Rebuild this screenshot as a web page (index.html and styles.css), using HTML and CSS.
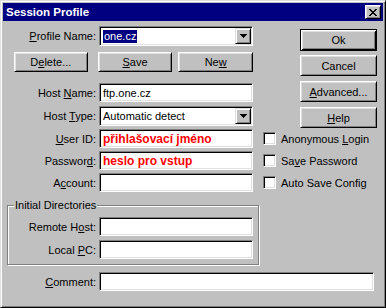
FILE: index.html
```html
<!DOCTYPE html>
<html lang="cs">
<head>
    <meta charset="UTF-8">
    <title>Session Profile</title>
    <link rel="stylesheet" href="styles.css">
</head>
<body>
    <div class="window">
        <div class="titlebar">
            <span class="title">Session Profile</span>
            <span class="close-btn">
                <svg width="8" height="7" viewBox="0 0 8 7" shape-rendering="crispEdges"><path d="M0 0h2v1H0zM6 0h2v1H6zM1 1h2v1H1zM5 1h2v1H5zM2 2h4v1H2zM3 3h2v1H3zM2 4h4v1H2zM1 5h2v1H1zM5 5h2v1H5zM0 6h2v1H0zM6 6h2v1H6z" fill="#000"/></svg>
            </span>
        </div>
        <div class="content">
            <!-- profile + host, buttons on the right -->
            <div class="top">
                <div class="top-left">
                    <div class="row row-profile">
                        <span class="label"><u>P</u>rofile Name:</span>
                        <div class="combo">
                            <span class="combo-text"><span class="selected">one.cz</span></span>
                            <span class="drop-btn">
                                <svg width="7" height="4" viewBox="0 0 7 4" shape-rendering="crispEdges"><path d="M0 0h7v1H0zM1 1h5v1H1zM2 2h3v1H2zM3 3h1v1H3z" fill="#000"/></svg>
                            </span>
                        </div>
                    </div>
                    <div class="btn-row">
                        <button class="btn btn-delete">D<u>e</u>lete...</button>
                        <button class="btn btn-save"><u>S</u>ave</button>
                        <button class="btn btn-new">Ne<u>w</u></button>
                    </div>
                    <div class="row row-host">
                        <span class="label">Host <u>N</u>ame:</span>
                        <div class="edit">ftp.one.cz</div>
                    </div>
                    <div class="row row-type">
                        <span class="label">Host <u>T</u>ype:</span>
                        <div class="combo">
                            <span class="combo-text">Automatic detect</span>
                            <span class="drop-btn">
                                <svg width="7" height="4" viewBox="0 0 7 4" shape-rendering="crispEdges"><path d="M0 0h7v1H0zM1 1h5v1H1zM2 2h3v1H2zM3 3h1v1H3z" fill="#000"/></svg>
                            </span>
                        </div>
                    </div>
                </div>
                <div class="side">
                    <button class="btn btn-default">Ok</button>
                    <button class="btn btn-side btn-cancel">Cancel</button>
                    <button class="btn btn-side"><u>A</u>dvanced...</button>
                    <button class="btn btn-side"><u>H</u>elp</button>
                </div>
            </div>

            <!-- login -->
            <div class="creds">
                <div class="row">
                    <span class="label"><u>U</u>ser ID:</span>
                    <div class="edit edit-red">přihlašovací jméno</div>
                    <div class="check"><span class="check-box"></span><span>Anonymous <u>L</u>ogin</span></div>
                </div>
                <div class="row row-next">
                    <span class="label">Passwor<u>d</u>:</span>
                    <div class="edit edit-red">heslo pro vstup</div>
                    <div class="check"><span class="check-box"></span><span>Sa<u>v</u>e Password</span></div>
                </div>
                <div class="row row-next">
                    <span class="label">A<u>c</u>count:</span>
                    <div class="edit"></div>
                    <div class="check"><span class="check-box"></span><span>Auto Save Config</span></div>
                </div>
            </div>

            <div class="group">
                <div class="group-title">Initial Directories</div>
                <div class="row row-remote">
                    <span class="label label-group">Remote H<u>o</u>st:</span>
                    <div class="edit"></div>
                </div>
                <div class="row row-local">
                    <span class="label label-group">Local <u>P</u>C:</span>
                    <div class="edit"></div>
                </div>
            </div>

            <div class="row row-comment">
                <span class="label"><u>C</u>omment:</span>
                <div class="edit edit-wide"></div>
            </div>
        </div>
    </div>
</body>
</html>
```

FILE: styles.css
```css
body {
    margin: 0;
    background-color: #c0c0c0;
    font-family: "Liberation Sans", Arial, sans-serif;
    font-size: 11px;
    color: #000;
}
.window {
    width: 386px;
    height: 308px;
    box-sizing: border-box;
    border: 1px solid;
    border-color: #dfdfdf #000 #000 #dfdfdf;
    box-shadow: inset 1px 1px #fff, inset -1px -1px #808080;
    padding: 2px;
    background-color: #c0c0c0;
}
.titlebar {
    height: 18px;
    background-color: #000080;
    display: flex;
    align-items: center;
    justify-content: space-between;
    padding: 0 2px 0 3px;
}
.title {
    color: #fff;
    font-weight: bold;
    font-size: 11.5px;
}
.close-btn {
    width: 16px;
    height: 14px;
    box-sizing: border-box;
    border: 1px solid;
    border-color: #fff #000 #000 #fff;
    box-shadow: inset 1px 1px #dfdfdf, inset -1px -1px #808080;
    background-color: #c0c0c0;
    display: flex;
    align-items: center;
    justify-content: center;
}
.close-btn svg {
    display: block;
}

.top {
    display: flex;
    align-items: flex-start;
}
.top-left {
    width: 250px;
}
.side {
    width: 77px;
    margin-left: 47px;
    padding-top: 8px;
    display: flex;
    flex-direction: column;
}

.row {
    display: flex;
    align-items: center;
}
.label {
    flex: none;
    width: 93px;
    margin-right: 3px;
    text-align: right;
    white-space: nowrap;
}
.label-group {
    width: 88px;
}
.row-profile {
    margin-top: 5px;
}
.row-host {
    margin-top: 11px;
}
.row-type {
    margin-top: 4px;
}

/* sunken fields */
.combo,
.edit {
    flex: none;
    width: 154px;
    box-sizing: border-box;
    border: 1px solid;
    border-color: #808080 #fff #fff #808080;
    box-shadow: inset 1px 1px #000, inset -1px -1px #dfdfdf;
    background-color: #fff;
}
.combo {
    height: 20px;
    padding: 1px;
    display: flex;
}
.combo-text {
    flex: 1;
    display: flex;
    align-items: center;
    padding-left: 2px;
}
.selected {
    background-color: #000080;
    color: #fff;
    padding: 0 1px;
    line-height: 13px;
}
.drop-btn {
    width: 16px;
    height: 16px;
    box-sizing: border-box;
    border: 1px solid;
    border-color: #dfdfdf #000 #000 #dfdfdf;
    box-shadow: inset 1px 1px #fff, inset -1px -1px #808080;
    background-color: #c0c0c0;
    display: flex;
    align-items: center;
    justify-content: center;
}
.drop-btn svg {
    display: block;
}
.edit {
    height: 19px;
    padding: 0 3px;
    display: flex;
    align-items: center;
    white-space: nowrap;
}
.edit-red {
    color: #f00;
    font-weight: bold;
    font-size: 12px;
}
.edit-wide {
    width: 275px;
}

/* raised buttons */
.btn {
    appearance: none;
    margin: 0;
    padding: 0;
    height: 20px;
    box-sizing: border-box;
    border: 1px solid;
    border-color: #fff #000 #000 #fff;
    box-shadow: inset 1px 1px #dfdfdf, inset -1px -1px #808080;
    background-color: #c0c0c0;
    font-family: inherit;
    font-size: 11px;
    color: #000;
    text-align: center;
}
.btn-row {
    display: flex;
    margin-top: 6px;
    padding-left: 11px;
}
.btn-delete {
    width: 74px;
}
.btn-save {
    width: 75px;
    margin-left: 10px;
}
.btn-new {
    width: 75px;
    margin-left: 6px;
}
.btn-default {
    height: 22px;
    border-color: #000;
    box-shadow: inset 1px 1px #fff, inset -1px -1px #000, inset 2px 2px #dfdfdf, inset -2px -2px #808080;
}
.btn-side {
    height: 21px;
    margin-top: 5px;
}
.btn-cancel {
    margin-top: 4px;
}

/* login + checkboxes */
.creds {
    margin-top: 1px;
}
.row-next {
    margin-top: 3px;
}
.check {
    display: flex;
    align-items: center;
    margin-left: 10px;
    white-space: nowrap;
}
.check-box {
    width: 13px;
    height: 13px;
    box-sizing: border-box;
    margin-right: 5px;
    border: 1px solid;
    border-color: #808080 #fff #fff #808080;
    box-shadow: inset 1px 1px #000, inset -1px -1px #dfdfdf;
    background-color: #fff;
}

/* group box */
.group {
    width: 252px;
    box-sizing: border-box;
    margin: 13px 0 0 4px;
    padding-bottom: 5px;
    border: 1px solid #808080;
    box-shadow: inset 1px 1px #fff, 1px 1px #fff;
}
.group-title {
    width: fit-content;
    margin: -7px 0 0 6px;
    padding: 0 1px;
    line-height: 13px;
    background-color: #c0c0c0;
}
.row-remote {
    margin-top: 5px;
}
.row-local {
    margin-top: 4px;
}
.row-comment {
    margin-top: 7px;
}
```
